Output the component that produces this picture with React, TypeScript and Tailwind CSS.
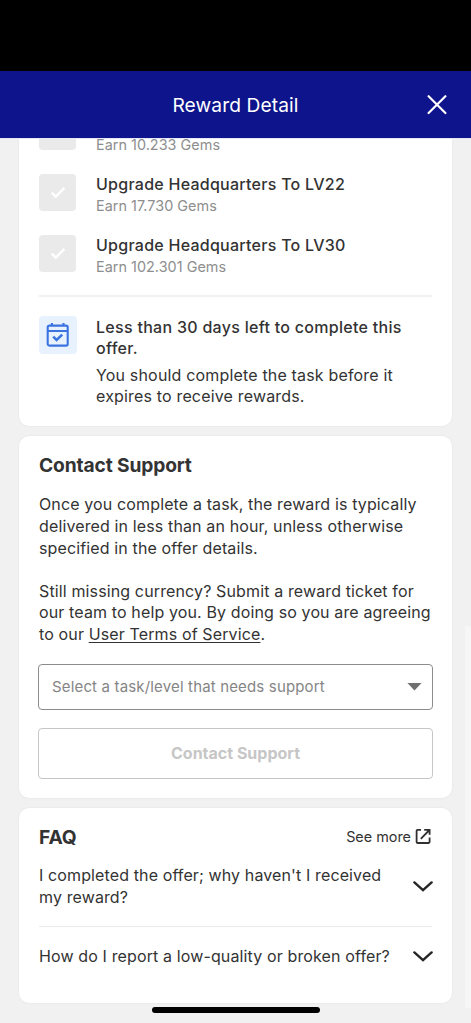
import React, { useState } from 'react'

interface Task {
  title?: string
  reward: string
}

const tasks: Task[] = [
  // scrolled under the header, only the reward line is left
  { reward: 'Earn 10.233 Gems' },
  { title: 'Upgrade Headquarters To LV22', reward: 'Earn 17.730 Gems' },
  { title: 'Upgrade Headquarters To LV30', reward: 'Earn 102.301 Gems' }
]

function CloseIcon() {
  return (
    <svg width="20" height="20" viewBox="0 0 20 20" fill="none" stroke="white" strokeWidth="2.2" strokeLinecap="round">
      <path d="M1.6 1.2 18.4 18M18.4 1.2 1.6 18" />
    </svg>
  )
}

function CheckIcon() {
  return (
    <svg width="16" height="14" viewBox="0 0 16 14" fill="none" stroke="white" strokeWidth="2.4">
      <path d="M1.6 6.6 5.8 10.6 14.4 1.9" />
    </svg>
  )
}

function CalendarIcon() {
  return (
    <svg width="24" height="26" viewBox="0 0 24 26" fill="none" stroke="#3b74e0" strokeWidth="2.1">
      <rect x="1.7" y="3.6" width="20" height="20" rx="1.6" />
      <path d="M1.7 9H21.7M5.9 1V4M17.5 1V4" />
      <path d="M7.2 14.6 10.6 18 16.2 12.6" strokeWidth="2.5" />
    </svg>
  )
}

function ExternalIcon() {
  return (
    <svg className="mr-px" width="16" height="16" viewBox="0 0 16 16" fill="none" stroke="#303030" strokeWidth="1.8">
      <path d="M6 1.8H2.5Q1.6 1.8 1.6 2.7V14.1Q1.6 15 2.5 15H13.7Q14.6 15 14.6 14.1V9.6" />
      <path d="M9.2 1.8H14.6V6.8M14.4 2 5.8 10.8" />
    </svg>
  )
}

function ChevronIcon() {
  return (
    <svg className="-mr-px shrink-0" width="20" height="12" viewBox="0 0 20 12" fill="none" stroke="#262626" strokeWidth="2.4" strokeLinecap="round">
      <path d="M1.4 1.4 10 9.2 18.6 1.4" />
    </svg>
  )
}

export default function App() {
  const [openFaq, setOpenFaq] = useState(-1)

  return (
    <div className="flex h-[1023px] w-[471px] flex-col overflow-hidden bg-[#f1f1f1] font-[Inter,'Liberation_Sans',sans-serif] text-[#333]">
      <div className="h-[71px] shrink-0 bg-black" />

      <header className="grid h-[67px] shrink-0 grid-cols-[1fr_auto_1fr] items-center bg-[#0d148c] px-6 text-white">
        <span />
        <h1 className="pt-px text-[19.2px] tracking-[0.1px] whitespace-nowrap">Reward Detail</h1>
        <button type="button" aria-label="Close" className="justify-self-end">
          <CloseIcon />
        </button>
      </header>

      <main className="relative flex min-h-0 flex-1 flex-col gap-[10px] overflow-hidden border-t border-[#e6e6fa] px-[19px]">
        {/* Tasks */}
        <section className="flex h-[287px] shrink-0 flex-col rounded-b-[10px] bg-white px-5 shadow-[0_0_2px_rgba(0,0,0,0.08)]">
          <div className="-mt-[27px] flex flex-col gap-[17px]">
            {tasks.map(task => (
              <div key={task.reward} className="flex h-11 gap-5">
                <div className="mt-px flex size-[37px] shrink-0 items-center justify-center rounded-[4px] bg-[#eaeaea]">
                  {task.title && <CheckIcon />}
                </div>
                <div className="flex flex-col justify-end whitespace-nowrap">
                  {task.title && (
                    <p className="text-[16px] leading-[22px] font-medium tracking-[0.26px]">{task.title}</p>
                  )}
                  <p className="text-[14.4px] leading-[22px] tracking-[0.03px] text-[#8e8e8e]">{task.reward}</p>
                </div>
              </div>
            ))}
          </div>
          <hr className="mt-[17px] border-t-2 border-[#f1f1f1]" />
          <div className="mt-[19px] flex gap-[19px]">
            <div className="flex size-[38px] shrink-0 items-center justify-center rounded-[4px] bg-[#e8f1fe]">
              <CalendarIcon />
            </div>
            <div className="pt-[0.6px] text-[16px] leading-[21.6px] whitespace-nowrap">
              <p className="font-medium tracking-[0.29px]">
                Less than 30 days left to complete this
                <br />
                offer.
              </p>
              <p className="mt-[4.8px] tracking-[0.17px]">
                You should complete the task before it
                <br />
                expires to receive rewards.
              </p>
            </div>
          </div>
        </section>

        {/* Support */}
        <section className="h-[362px] shrink-0 rounded-[10px] bg-white px-5 pt-4 shadow-[0_0_2px_rgba(0,0,0,0.08)]">
          <h2 className="text-[19.2px] leading-[26px] font-bold tracking-[-0.13px]">Contact Support</h2>
          <div className="mt-[16.4px] text-[16px] leading-[21.6px] tracking-[0.13px] whitespace-nowrap">
            <p>
              Once you complete a task, the reward is typically
              <br />
              delivered in less than an hour, unless otherwise
              <br />
              specified in the offer details.
            </p>
            <p className="mt-[21.6px]">
              Still missing currency? Submit a reward ticket for
              <br />
              our team to help you. By doing so you are agreeing
              <br />
              to our <a className="underline underline-offset-2">User Terms of Service</a>.
            </p>
          </div>
          <div className="-mx-px mt-[18px] flex flex-col gap-[18px]">
            <button
              type="button"
              className="flex h-[46px] items-center justify-between rounded-[4px] border border-[#8c8c8c] pr-[10px] pl-[13px] text-[15px] tracking-[0.16px] text-[#858585]"
            >
              <span className="pt-[2px]">Select a task/level that needs support</span>
              <svg width="15" height="8" viewBox="0 0 15 8" fill="#707070">
                <path d="M0.4 0H14.6L7.5 7.6Z" />
              </svg>
            </button>
            <button
              type="button"
              disabled
              className="h-[51px] rounded-[4px] border border-[#c6c6c6] text-[16px] font-bold text-[#c6c6c6]"
            >
              Contact Support
            </button>
          </div>
        </section>

        {/* FAQ */}
        <section className="h-[195px] shrink-0 rounded-[10px] bg-white px-5 pt-4 shadow-[0_0_2px_rgba(0,0,0,0.08)]">
          <div className="flex h-[27px] items-center justify-between">
            <h2 className="text-[19.2px] font-bold tracking-[-0.1px]">FAQ</h2>
            <a className="flex items-center gap-1 pb-[2px] text-[14.4px]">
              See more
              <ExternalIcon />
            </a>
          </div>
          <button
            type="button"
            onClick={() => setOpenFaq(openFaq === 0 ? -1 : 0)}
            className="mt-[14px] flex w-full items-center justify-between text-left text-[16px] leading-[21.6px] tracking-[0.12px] whitespace-nowrap"
          >
            <span>
              I completed the offer; why haven't I received
              <br />
              my reward?
            </span>
            <ChevronIcon />
          </button>
          <hr className="mt-[18px] border-[#ebebeb]" />
          <button
            type="button"
            onClick={() => setOpenFaq(openFaq === 1 ? -1 : 1)}
            className="mt-[18.6px] flex w-full items-center justify-between text-left text-[16px] leading-[21.6px] tracking-[0.13px] whitespace-nowrap"
          >
            <span>How do I report a low-quality or broken offer?</span>
            <ChevronIcon />
          </button>
        </section>

        {/* scrollbar thumb and home indicator float over the content */}
        <div className="absolute top-[487px] right-0 h-[382px] w-[6px] bg-[#f6f6f6]" />
        <div className="absolute bottom-[10px] left-[152px] h-[6px] w-[168px] rounded-full bg-black" />
      </main>
    </div>
  )
}
